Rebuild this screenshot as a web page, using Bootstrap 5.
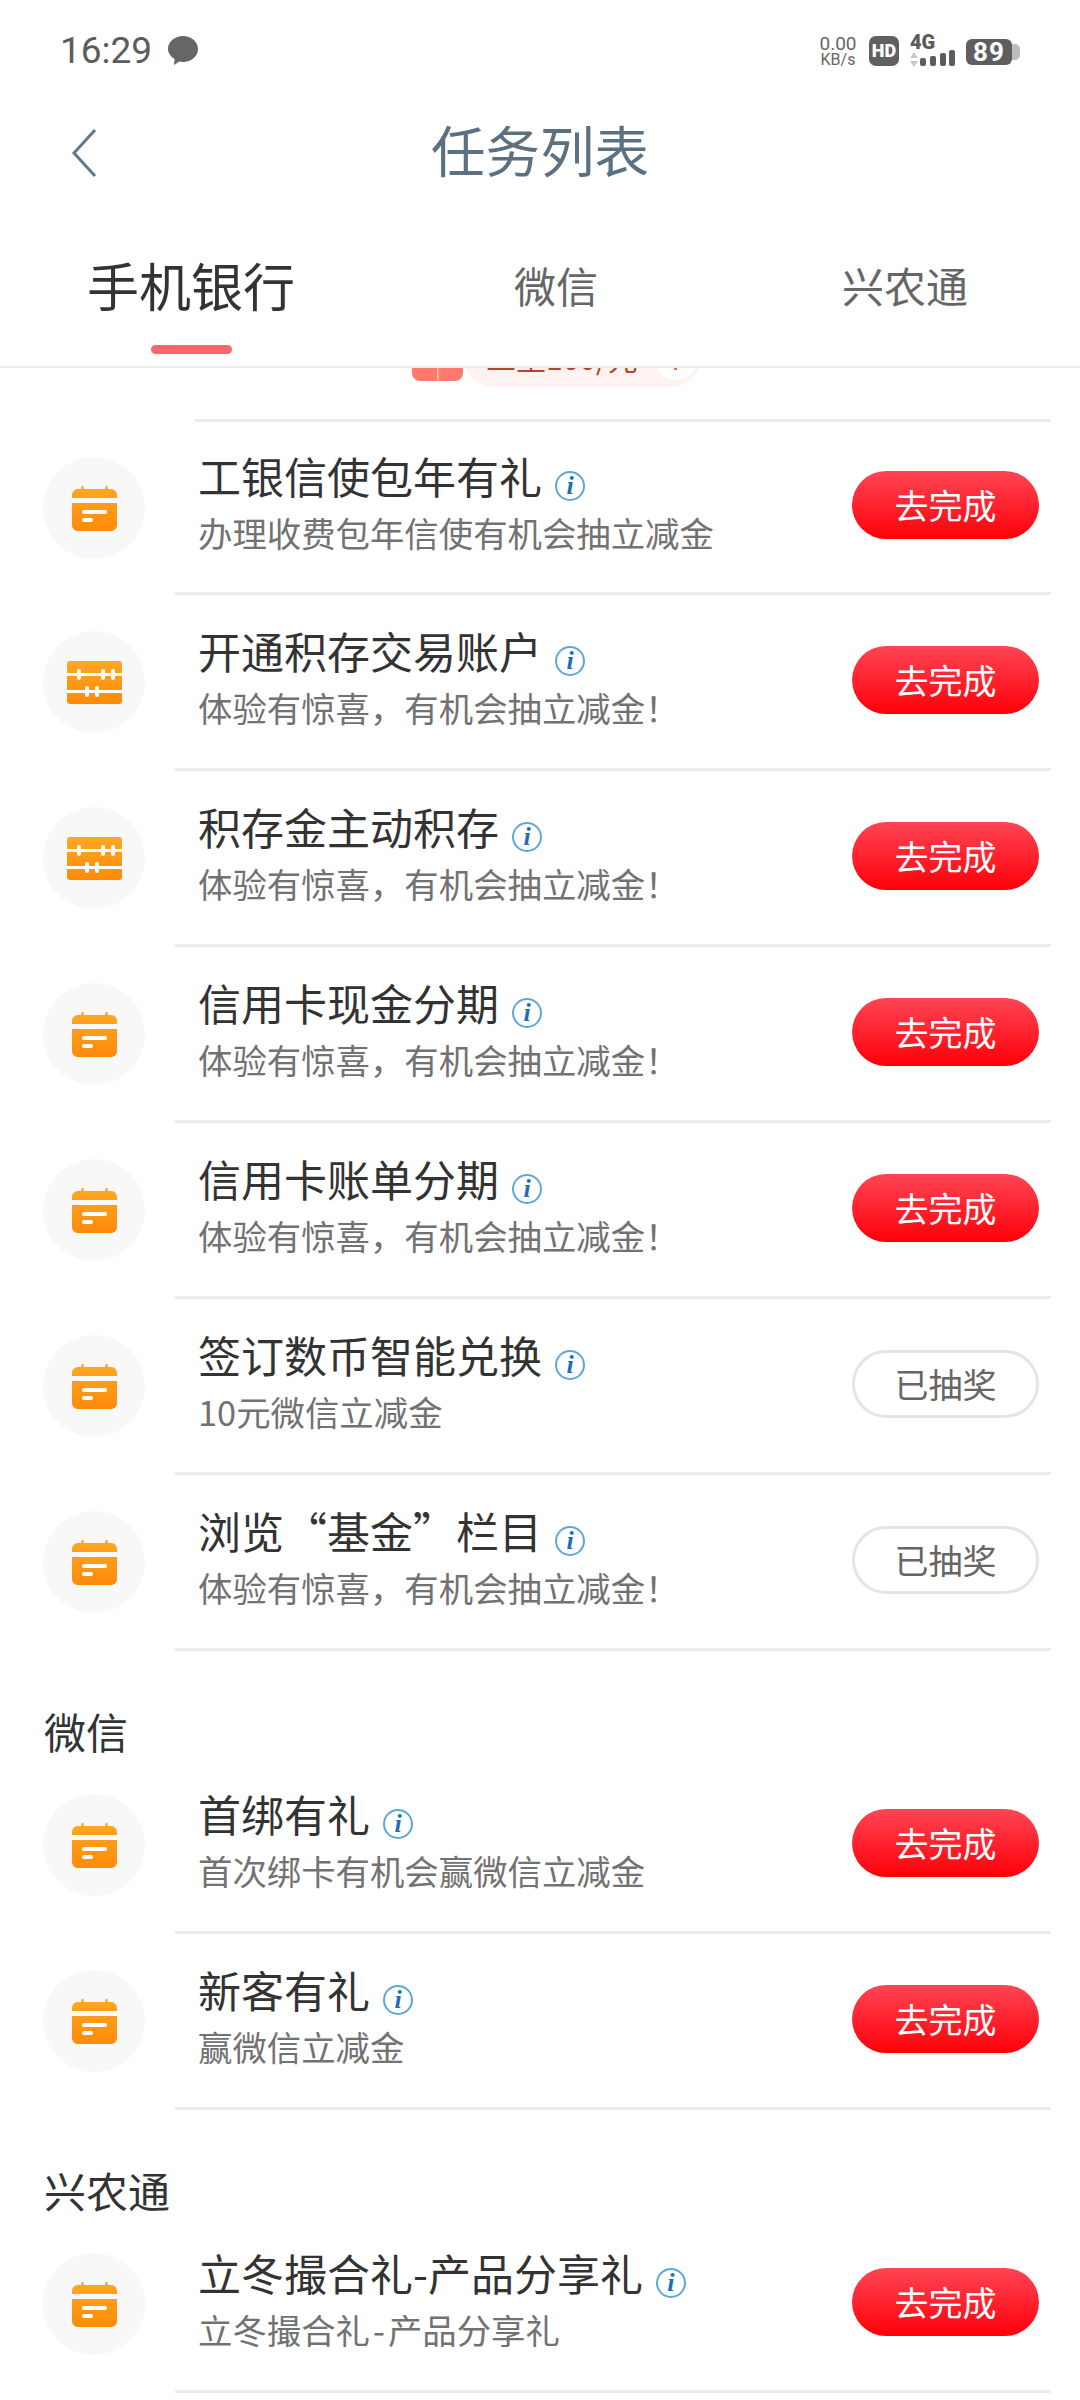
<!DOCTYPE html>
<html lang="zh-CN">

<head>
    <meta charset="UTF-8">
    <title>任务列表</title>
    <link href="https://cdn.jsdelivr.net/npm/bootstrap@5.3.3/dist/css/bootstrap.min.css" rel="stylesheet">
    <style>
        body {
            background-color: #fff;
            font-family: "Noto Sans CJK SC", "Noto Sans", sans-serif;
            color: #333;
        }

        .app-page {
            width: 1080px;
            height: 2400px;
            overflow: hidden;
        }

        /* status bar */
        .status-strip {
            height: 100px;
            padding: 31px 60px 0 60px;
            font-family: Roboto, sans-serif;
            color: #5c5c5c;
        }

        .status-time {
            font-size: 37px;
            line-height: 40px;
        }

        .status-bubble {
            width: 30px;
            height: 29px;
            margin-left: 16px;
            margin-top: 5px;
        }

        .status-speed {
            width: 38px;
            text-align: center;
            margin-top: 3px;
            font-size: 19px;
            line-height: 20px;
            color: #666;
        }

        .status-speed small {
            display: block;
            font-size: 16px;
            line-height: 12px;
        }

        .status-hd {
            width: 30px;
            height: 30px;
            margin-left: 12px;
            margin-top: 5px;
            border-radius: 7px;
            background: #606060;
            color: #fff;
            font-weight: 900;
            font-size: 18px;
            line-height: 30px;
            text-align: center;
        }

        .status-signal {
            width: 46px;
            height: 34px;
            margin-left: 11px;
            margin-top: 2px;
            overflow: visible;
        }

        .status-battery {
            width: 46px;
            height: 26px;
            margin-left: 10px;
            margin-top: 8px;
            border-radius: 6px;
            background: #5e5e5e;
            color: #fff;
            font-weight: 700;
            font-size: 26px;
            line-height: 26px;
            text-align: center;
            letter-spacing: 1px;
        }

        .status-tip {
            width: 8px;
            height: 16px;
            margin-top: 13px;
            border-radius: 0 5px 5px 0;
            background: #bdbdbd;
        }

        /* title bar */
        .title-strip {
            height: 105px;
        }

        .title-side {
            width: 180px;
            padding-left: 71px;
        }

        .title-text {
            padding-bottom: 8px;
            font-size: 54.5px;
            line-height: 64px;
            color: #5b7080;
        }

        /* tabs */
        .tab-strip {
            height: 163px;
            border-bottom: 2px solid #ececec;
            display: grid;
            grid-template-columns: 382px 348px 350px;
        }

        .tab-link {
            padding-top: 50px;
            font-size: 42px;
            line-height: 60px;
            color: #666;
            text-align: center;
        }

        .tab-link.is-on {
            font-size: 52px;
            color: #333;
        }

        .tab-bar {
            display: block;
            width: 81px;
            height: 9px;
            margin: 30px auto 0;
            border-radius: 5px;
            background: #fa6570;
        }

        /* half hidden banner at the top of the list */
        .peek-row {
            height: 54px;
            overflow: hidden;
            padding-left: 412px;
        }

        .peek-gift {
            width: 51px;
            height: 40px;
            margin-bottom: 41px;
            border-radius: 0 0 8px 8px;
            background: linear-gradient(90deg, #ff7a6b 48%, #ffc9bf 50%, #ff7a6b 54%);
        }

        .peek-pill {
            width: 238px;
            height: 60px;
            margin-bottom: 35px;
            padding: 0 3px 0 23px;
            border-radius: 0 0 30px 30px;
            background: #fff3f1;
            color: #b5432f;
            font-size: 30px;
            line-height: 60px;
        }

        .peek-dot {
            position: relative;
            width: 44px;
            height: 44px;
            margin-bottom: 7px;
            border-radius: 50%;
            background: #fff;
        }

        .peek-dot::after {
            content: "";
            position: absolute;
            left: 20px;
            top: 30px;
            width: 3px;
            height: 4px;
            background: #d9745f;
        }

        .peek-line {
            height: 3px;
            margin: -3px 29px 0 195px;
            background: #ececec;
        }

        /* list */
        .group-head {
            height: 107px;
            padding: 50px 0 0 44px;
            font-size: 42px;
            line-height: 60px;
            color: #333;
        }

        .task-row {
            height: 176px;
            padding-left: 43px;
        }

        .task-row.is-first {
            height: 173px;
        }

        .task-badge {
            width: 102px;
            height: 102px;
            margin-bottom: 2px;
            border-radius: 50%;
            background: #f8f8f8;
        }

        .task-body {
            height: 100%;
            margin: 0 29px 0 30px;
            padding: 0 12px 0 23px;
            border-bottom: 3px solid #ececec;
        }

        .task-copy {
            padding-bottom: 7px;
        }

        .task-name {
            font-size: 43px;
            line-height: 56px;
            color: #333;
        }

        .task-info {
            width: 30px;
            height: 30px;
            margin: 22px 0 0 13px;
            border: 2px solid #5da7da;
            border-radius: 50%;
            font-family: "Liberation Serif", serif;
            font-style: italic;
            font-weight: 700;
            font-size: 26px;
            line-height: 25px;
            text-align: center;
            color: #1b70b8;
        }

        .task-note {
            margin-top: 1px;
            font-size: 34.4px;
            line-height: 56px;
            color: #727272;
            white-space: nowrap;
        }

        .task-dash {
            margin: 0 3px;
        }

        .task-btn {
            width: 187px;
            height: 68px;
            margin-bottom: 4px;
            padding: 0;
            border: 0;
            font-size: 34px;
            line-height: 64px;
            color: #fff;
            background: linear-gradient(180deg, #ff4555, #fe0008);
        }

        .task-btn.is-done {
            border: 3px solid #e4e4e4;
            line-height: 58px;
            color: #666;
            background: #fff;
        }
    </style>
</head>

<body>
    <svg width="0" height="0" class="position-absolute">
        <defs>
            <linearGradient id="orange" x1="0" y1="0" x2="0" y2="1">
                <stop offset="0" stop-color="#ffa824" />
                <stop offset="1" stop-color="#ff8a08" />
            </linearGradient>
        </defs>
        <symbol id="ic-calendar" viewBox="0 0 45 46">
            <path fill="url(#orange)" d="M9 4.500 9.500 1.500c.2-1 1.800-1 2 0L12 4h21l.5-2.500c.2-1 1.800-1 2 0L36 4h3c3.300 0 6 2.700 6 6v3H0v-3c0-3.300 2.700-6 6-6h3zM0 18h45v22c0 3.300-2.700 6-6 6H6c-3.300 0-6-2.700-6-6z" />
            <rect x="10" y="25" width="25" height="4" rx="2" fill="#fff" />
            <rect x="10" y="33" width="11" height="4" rx="2" fill="#fff" />
        </symbol>
        <symbol id="ic-abacus" viewBox="0 0 55 43">
            <rect width="55" height="43" rx="3" fill="url(#orange)" />
            <rect y="12" width="55" height="3" fill="#fff" />
            <rect y="29" width="55" height="3" fill="#fff" />
            <rect x="10" y="8" width="4" height="11" rx="2" fill="#fff" />
            <rect x="34" y="8" width="4" height="11" rx="2" fill="#fff" />
            <rect x="44" y="8" width="4" height="11" rx="2" fill="#fff" />
            <rect x="18" y="25" width="4" height="11" rx="2" fill="#fff" />
            <rect x="28" y="25" width="4" height="11" rx="2" fill="#fff" />
        </symbol>
    </svg>

    <div class="app-page">
        <div class="status-strip d-flex align-items-start">
            <span class="status-time">16:29</span>
            <svg class="status-bubble" viewBox="0 0 30 29">
                <path fill="#666" d="M15 0c8.300 0 15 5.800 15 13s-6.700 13-15 13c-1.300 0-2.500-.1-3.700-.4L6 29l.6-6C2.600 20.600 0 17 0 13 0 5.800 6.700 0 15 0z" />
            </svg>
            <div class="status-speed ms-auto">0.00<small>KB/s</small></div>
            <div class="status-hd">HD</div>
            <svg class="status-signal" viewBox="0 0 46 34">
                <text x="0" y="16" font-family="Roboto, sans-serif" font-weight="900" font-size="20" fill="#5c5c5c">4G</text>
                <path fill="#c8c8c8" d="M4 19l4 6H0zM4 34l4-6H0z" />
                <rect x="10" y="25" width="6" height="8" rx="2" fill="#5c5c5c" />
                <rect x="20" y="23" width="6" height="10" rx="2" fill="#5c5c5c" />
                <rect x="30" y="20" width="6" height="13" rx="2" fill="#5c5c5c" />
                <rect x="39" y="17" width="6" height="16" rx="2" fill="#5c5c5c" />
            </svg>
            <div class="status-battery">89</div>
            <div class="status-tip"></div>
        </div>

        <div class="title-strip d-flex align-items-center">
            <div class="title-side">
                <svg class="d-block" width="26" height="50" viewBox="0 0 26 50">
                    <path fill="none" stroke="#5f7a8c" stroke-width="3" d="M24 2 3 25l21 23" />
                </svg>
            </div>
            <div class="title-text flex-grow-1 text-center">任务列表</div>
            <div class="title-side"></div>
        </div>

        <div class="tab-strip">
            <div class="tab-link is-on">手机银行<span class="tab-bar"></span></div>
            <div class="tab-link">微信</div>
            <div class="tab-link">兴农通</div>
        </div>

        <div class="peek-row d-flex align-items-end">
            <div class="peek-gift flex-shrink-0"></div>
            <div class="peek-pill d-flex align-items-end justify-content-between flex-shrink-0">
                <span class="text-nowrap">二至100/元</span>
                <span class="peek-dot"></span>
            </div>
        </div>
        <div class="peek-line"></div>

        <div class="task-row is-first d-flex align-items-center">
            <div class="task-badge d-flex align-items-center justify-content-center flex-shrink-0"><svg width="45" height="46"><use href="#ic-calendar" /></svg></div>
            <div class="task-body flex-grow-1 d-flex align-items-center justify-content-between">
                <div class="task-copy">
                    <div class="task-name d-flex align-items-center">工银信使包年有礼<span class="task-info">i</span></div>
                    <div class="task-note">办理收费包年信使有机会抽立减金</div>
                </div>
                <button class="btn task-btn rounded-pill">去完成</button>
            </div>
        </div>
        <div class="task-row d-flex align-items-center">
            <div class="task-badge d-flex align-items-center justify-content-center flex-shrink-0"><svg width="55" height="43"><use href="#ic-abacus" /></svg></div>
            <div class="task-body flex-grow-1 d-flex align-items-center justify-content-between">
                <div class="task-copy">
                    <div class="task-name d-flex align-items-center">开通积存交易账户<span class="task-info">i</span></div>
                    <div class="task-note">体验有惊喜，有机会抽立减金！</div>
                </div>
                <button class="btn task-btn rounded-pill">去完成</button>
            </div>
        </div>
        <div class="task-row d-flex align-items-center">
            <div class="task-badge d-flex align-items-center justify-content-center flex-shrink-0"><svg width="55" height="43"><use href="#ic-abacus" /></svg></div>
            <div class="task-body flex-grow-1 d-flex align-items-center justify-content-between">
                <div class="task-copy">
                    <div class="task-name d-flex align-items-center">积存金主动积存<span class="task-info">i</span></div>
                    <div class="task-note">体验有惊喜，有机会抽立减金！</div>
                </div>
                <button class="btn task-btn rounded-pill">去完成</button>
            </div>
        </div>
        <div class="task-row d-flex align-items-center">
            <div class="task-badge d-flex align-items-center justify-content-center flex-shrink-0"><svg width="45" height="46"><use href="#ic-calendar" /></svg></div>
            <div class="task-body flex-grow-1 d-flex align-items-center justify-content-between">
                <div class="task-copy">
                    <div class="task-name d-flex align-items-center">信用卡现金分期<span class="task-info">i</span></div>
                    <div class="task-note">体验有惊喜，有机会抽立减金！</div>
                </div>
                <button class="btn task-btn rounded-pill">去完成</button>
            </div>
        </div>
        <div class="task-row d-flex align-items-center">
            <div class="task-badge d-flex align-items-center justify-content-center flex-shrink-0"><svg width="45" height="46"><use href="#ic-calendar" /></svg></div>
            <div class="task-body flex-grow-1 d-flex align-items-center justify-content-between">
                <div class="task-copy">
                    <div class="task-name d-flex align-items-center">信用卡账单分期<span class="task-info">i</span></div>
                    <div class="task-note">体验有惊喜，有机会抽立减金！</div>
                </div>
                <button class="btn task-btn rounded-pill">去完成</button>
            </div>
        </div>
        <div class="task-row d-flex align-items-center">
            <div class="task-badge d-flex align-items-center justify-content-center flex-shrink-0"><svg width="45" height="46"><use href="#ic-calendar" /></svg></div>
            <div class="task-body flex-grow-1 d-flex align-items-center justify-content-between">
                <div class="task-copy">
                    <div class="task-name d-flex align-items-center">签订数币智能兑换<span class="task-info">i</span></div>
                    <div class="task-note">10元微信立减金</div>
                </div>
                <button class="btn task-btn is-done rounded-pill">已抽奖</button>
            </div>
        </div>
        <div class="task-row d-flex align-items-center">
            <div class="task-badge d-flex align-items-center justify-content-center flex-shrink-0"><svg width="45" height="46"><use href="#ic-calendar" /></svg></div>
            <div class="task-body flex-grow-1 d-flex align-items-center justify-content-between">
                <div class="task-copy">
                    <div class="task-name d-flex align-items-center">浏览“基金”栏目<span class="task-info">i</span></div>
                    <div class="task-note">体验有惊喜，有机会抽立减金！</div>
                </div>
                <button class="btn task-btn is-done rounded-pill">已抽奖</button>
            </div>
        </div>

        <div class="group-head">微信</div>
        <div class="task-row d-flex align-items-center">
            <div class="task-badge d-flex align-items-center justify-content-center flex-shrink-0"><svg width="45" height="46"><use href="#ic-calendar" /></svg></div>
            <div class="task-body flex-grow-1 d-flex align-items-center justify-content-between">
                <div class="task-copy">
                    <div class="task-name d-flex align-items-center">首绑有礼<span class="task-info">i</span></div>
                    <div class="task-note">首次绑卡有机会赢微信立减金</div>
                </div>
                <button class="btn task-btn rounded-pill">去完成</button>
            </div>
        </div>
        <div class="task-row d-flex align-items-center">
            <div class="task-badge d-flex align-items-center justify-content-center flex-shrink-0"><svg width="45" height="46"><use href="#ic-calendar" /></svg></div>
            <div class="task-body flex-grow-1 d-flex align-items-center justify-content-between">
                <div class="task-copy">
                    <div class="task-name d-flex align-items-center">新客有礼<span class="task-info">i</span></div>
                    <div class="task-note">赢微信立减金</div>
                </div>
                <button class="btn task-btn rounded-pill">去完成</button>
            </div>
        </div>

        <div class="group-head">兴农通</div>
        <div class="task-row d-flex align-items-center">
            <div class="task-badge d-flex align-items-center justify-content-center flex-shrink-0"><svg width="45" height="46"><use href="#ic-calendar" /></svg></div>
            <div class="task-body flex-grow-1 d-flex align-items-center justify-content-between">
                <div class="task-copy">
                    <div class="task-name d-flex align-items-center">立冬撮合礼-产品分享礼<span class="task-info">i</span></div>
                    <div class="task-note">立冬撮合礼<span class="task-dash">-</span>产品分享礼</div>
                </div>
                <button class="btn task-btn rounded-pill">去完成</button>
            </div>
        </div>
    </div>

    <script src="https://cdn.jsdelivr.net/npm/bootstrap@5.3.3/dist/js/bootstrap.bundle.min.js"></script>
</body>

</html>
